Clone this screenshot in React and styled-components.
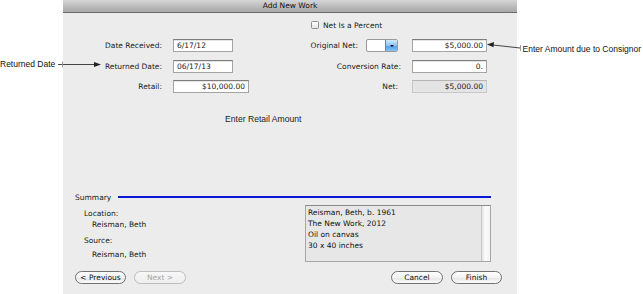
import React from "react";
import styled, { createGlobalStyle } from "styled-components";

const GlobalStyle = createGlobalStyle`
  html, body {
    margin: 0;
    padding: 0;
    background: #fff;
  }
  body {
    font-family: "DejaVu Sans", sans-serif;
  }
`;

const Page = styled.div`
  position: relative;
  width: 643px;
  height: 294px;
  display: flex;
  overflow: hidden;
`;

const Gutter = styled.div`
  width: ${(p) => (p.width ? `${p.width}px` : "auto")};
  flex: ${(p) => (p.width ? "none" : "1")};
  padding-top: ${(p) => p.top}px;
  padding-left: ${(p) => p.left || 0}px;
  box-sizing: border-box;
  font-family: "Liberation Sans", Arial, sans-serif;
  font-size: 8.5px;
  line-height: 10px;
  color: #111;
  white-space: nowrap;
`;

const Callouts = styled.svg`
  position: absolute;
  left: 0;
  top: 0;
  pointer-events: none;
`;

const Window = styled.div`
  width: 454px;
  flex: none;
  display: flex;
  flex-direction: column;
  background: #ececec;
  font-size: 7.5px;
  color: #1a1a1a;
`;

const TitleBar = styled.div`
  height: 12px;
  line-height: 12px;
  border-bottom: 1px solid #6c6c6c;
  background: linear-gradient(#d6d6d6, #b9b9b9 60%, #a9a9a9);
  text-align: center;
  color: #111;
`;

const Body = styled.div`
  flex: 1;
  display: flex;
  flex-direction: column;
  padding: 5.5px 0 10px;
`;

const FormGrid = styled.div`
  display: grid;
  grid-template-columns: 99px 76px 141px 74px;
  grid-auto-rows: 13px;
  column-gap: 11px;
  row-gap: 7.5px;
  align-items: center;
`;

const CheckCell = styled.label`
  grid-column: 3 / span 2;
  display: flex;
  align-items: center;
  gap: 4px;
  padding-left: 51px;
`;

const CheckBox = styled.span`
  width: 8px;
  height: 8px;
  box-sizing: border-box;
  border: 1px solid #8e8e8e;
  border-radius: 1.5px;
  background: linear-gradient(#fdfdfd, #e6e6e6);
`;

const Label = styled.div`
  justify-self: end;
  white-space: nowrap;
  padding-right: ${(p) => p.pad || 0}px;
`;

const LabelWithSelect = styled.div`
  display: flex;
  align-items: center;
  justify-content: flex-end;
  gap: 8px;
  padding-right: 3px;
  white-space: nowrap;
`;

const Field = styled.div`
  width: ${(p) => p.width}px;
  height: 13px;
  box-sizing: border-box;
  padding: 0 3px;
  line-height: 11px;
  text-align: ${(p) => p.align || "left"};
  background: ${(p) => (p.disabled ? "#e4e4e4" : "#fff")};
  border: 1px solid ${(p) => (p.disabled ? "#c8c8c8" : "#a4a4a4")};
  border-top-color: ${(p) => (p.disabled ? "#b4b4b4" : "#7d7d7d")};
  box-shadow: ${(p) => (p.disabled ? "none" : "inset 0 1px 0 #e4e4e4")};
  white-space: nowrap;
`;

const Select = styled.div`
  width: 32px;
  height: 13px;
  display: flex;
  box-sizing: border-box;
  border: 1px solid #9a9a9a;
  border-radius: 2px;
  background: #fff;
  overflow: hidden;
`;

const SelectButton = styled.div`
  margin-left: auto;
  width: 11px;
  display: flex;
  align-items: center;
  justify-content: center;
  background: linear-gradient(#d2eafc, #8cc3f2 50%, #4f9be6 51%, #86c6f6);
  border-left: 1px solid #5f86b0;

  &::after {
    content: "";
    border-left: 2px solid transparent;
    border-right: 2px solid transparent;
    border-top: 2.5px solid #111;
  }
`;

const Message = styled.div`
  margin-top: 21px;
  padding-left: 162px;
  font-family: "Liberation Sans", Arial, sans-serif;
  font-size: 8.6px;
  line-height: 10px;
  color: #222;
`;

const Summary = styled.div`
  margin-top: auto;
  padding: 0 26px 0 12px;
`;

const SummaryHeader = styled.div`
  height: 10px;
  display: flex;
  align-items: center;
  gap: 7px;
`;

const Rule = styled.div`
  flex: 1;
  height: 2px;
  background: #0b16d6;
`;

const SummaryBody = styled.div`
  display: flex;
  margin-top: 3px;
  height: 57px;
`;

const SummaryInfo = styled.div`
  flex: 1;
  padding-left: 9px;
`;

const InfoLine = styled.div`
  line-height: 11px;
  padding-left: ${(p) => (p.value ? 8 : 0)}px;
  margin-top: ${(p) => p.gap || 0}px;
`;

const TextBox = styled.div`
  width: 186px;
  display: flex;
  box-sizing: border-box;
  border: 1px solid #a6a6a6;
  border-top-color: #8a8a8a;
  background: #e7e7e7;
`;

const TextLines = styled.div`
  flex: 1;
  padding: 1px 2px;
  line-height: 11px;
  color: #111;
`;

const ScrollTrack = styled.div`
  width: 8px;
  background: linear-gradient(90deg, #e2e2e2, #fbfbfb 40%, #f4f4f4);
  border-left: 1px solid #c8c8c8;
`;

const ButtonRow = styled.div`
  display: flex;
  gap: 8px;
  margin-top: 9px;
  padding: 0 15px 0 12px;
`;

const Spacer = styled.div`
  flex: 1;
`;

const PillButton = styled.div`
  width: ${(p) => p.width}px;
  height: 13px;
  box-sizing: border-box;
  border: 1px solid ${(p) => (p.disabled ? "#bdbdbd" : "#727272")};
  border-radius: 7px;
  background: ${(p) =>
    p.disabled
      ? "linear-gradient(#f7f7f7, #efefef)"
      : "linear-gradient(#ffffff, #f3f3f3 50%, #e6e6e6 55%, #fbfbfb)"};
  color: ${(p) => (p.disabled ? "#a6a6a6" : "#111")};
  text-align: center;
  line-height: 11px;
  white-space: nowrap;
`;

export default function App() {
  return (
    <Page>
      <GlobalStyle />
      <Gutter width={63} top={59}>
        Returned Date
      </Gutter>
      <Window>
        <TitleBar>Add New Work</TitleBar>
        <Body>
          <FormGrid>
            <div />
            <div />
            <CheckCell>
              <CheckBox />
              Net Is a Percent
            </CheckCell>

            <Label>Date Received:</Label>
            <Field width={60}>6/17/12</Field>
            <LabelWithSelect>
              Original Net:
              <Select>
                <SelectButton />
              </Select>
            </LabelWithSelect>
            <Field width={75} align="right">
              $5,000.00
            </Field>

            <Label>Returned Date:</Label>
            <Field width={60}>06/17/13</Field>
            <Label>Conversion Rate:</Label>
            <Field width={75} align="right">
              0.
            </Field>

            <Label>Retail:</Label>
            <Field width={76} align="right">
              $10,000.00
            </Field>
            <Label pad={3}>Net:</Label>
            <Field width={75} align="right" disabled>
              $5,000.00
            </Field>
          </FormGrid>

          <Message>Enter Retail Amount</Message>

          <Summary>
            <SummaryHeader>
              Summary
              <Rule />
            </SummaryHeader>
            <SummaryBody>
              <SummaryInfo>
                <InfoLine gap={2.5}>Location:</InfoLine>
                <InfoLine value>Reisman, Beth</InfoLine>
                <InfoLine gap={5}>Source:</InfoLine>
                <InfoLine value gap={3}>
                  Reisman, Beth
                </InfoLine>
              </SummaryInfo>
              <TextBox>
                <TextLines>
                  <div>Reisman, Beth, b. 1961</div>
                  <div>The New Work, 2012</div>
                  <div>Oil on canvas</div>
                  <div>30 x 40 inches</div>
                </TextLines>
                <ScrollTrack />
              </TextBox>
            </SummaryBody>
          </Summary>

          <ButtonRow>
            <PillButton width={51}>&lt; Previous</PillButton>
            <PillButton width={52} disabled>
              Next &gt;
            </PillButton>
            <Spacer />
            <PillButton width={52}>Cancel</PillButton>
            <PillButton width={51}>Finish</PillButton>
          </ButtonRow>
        </Body>
      </Window>
      <Gutter top={44} left={5.5}>
        Enter Amount due to Consignor
      </Gutter>

      <Callouts width="643" height="294" viewBox="0 0 643 294">
        <line x1="58" y1="64.5" x2="96" y2="64.5" stroke="#444" strokeWidth="1" />
        <line x1="62.5" y1="61.5" x2="62.5" y2="67.5" stroke="#9a9a9a" strokeWidth="1" />
        <polygon points="94,62 101,64.5 94,67" fill="#222" />
        <line x1="493" y1="45" x2="520" y2="48" stroke="#444" strokeWidth="1" />
        <line x1="520.5" y1="45" x2="520.5" y2="51" stroke="#9a9a9a" strokeWidth="1" />
        <polygon points="487,44.5 494,42 493.5,47.2" fill="#222" />
      </Callouts>
    </Page>
  );
}
